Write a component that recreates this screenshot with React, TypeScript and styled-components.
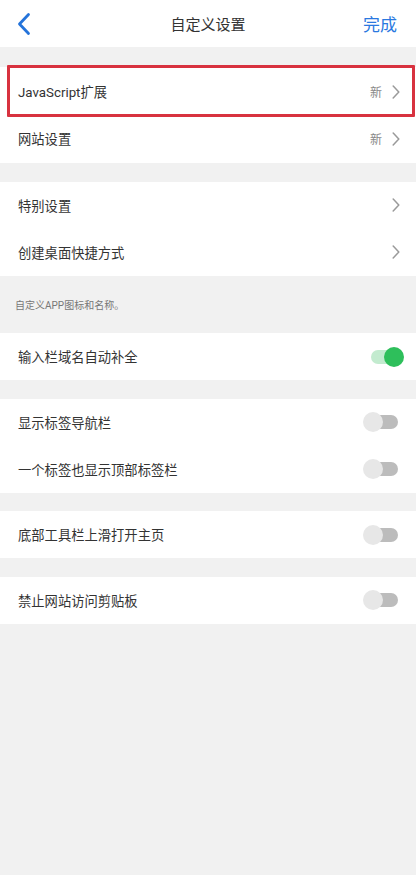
import React from "react";
import styled, { createGlobalStyle } from "styled-components";

const GlobalStyle = createGlobalStyle`
  html, body {
    margin: 0;
    padding: 0;
    background: #f1f1f1;
  }
  body {
    font-family: Roboto, "Noto Sans CJK SC", sans-serif;
    color: #333;
  }
`;

const Page = styled.div`
  width: 416px;
  min-height: 875px;
  background: #f1f1f1;
  display: flex;
  flex-direction: column;
`;

const Header = styled.header`
  height: 47px;
  background: #fff;
  display: grid;
  grid-template-columns: 80px 1fr 80px;
  align-items: center;
  margin-bottom: 20px;
`;

const BackButton = styled.div`
  padding-left: 16px;
  display: flex;
  align-items: center;
  svg {
    display: block;
  }
`;

const Title = styled.div`
  text-align: center;
  font-size: 15px;
  color: #333;
`;

const Done = styled.div`
  text-align: right;
  padding-right: 19px;
  font-size: 17px;
  color: #2a78e0;
`;

const Group = styled.section<{ $pad?: number }>`
  background: #fff;
  display: flex;
  flex-direction: column;
  padding: ${(p) => p.$pad ?? 0}px 0;
  margin-bottom: 18.6px;
`;

const Row = styled.div<{ $highlight?: boolean }>`
  position: relative;
  height: 47px;
  display: flex;
  align-items: center;
  padding: 0 12px 0 18px;
  font-size: 13.3px;
  color: #333;

  ${(p) =>
    p.$highlight &&
    `
    &::after {
      content: "";
      position: absolute;
      left: 7px;
      right: 1px;
      top: -3px;
      bottom: -2px;
      border: 3px solid #d8323f;
      border-radius: 1px;
      pointer-events: none;
    }
  `}
`;

const Label = styled.span`
  flex: 1;
`;

const Badge = styled.span`
  font-size: 12px;
  color: #888;
  margin-right: 7px;
`;

const Chevron = styled.span`
  width: 14px;
  display: flex;
  justify-content: center;
  margin-right: 1px;
  svg {
    display: block;
  }
`;

const Caption = styled.div`
  height: 57.6px;
  display: flex;
  align-items: center;
  padding-left: 15px;
  font-size: 10px;
  color: #777;
  margin-top: -18.6px;
`;

const Switch = styled.div`
  position: relative;
  width: 40px;
  height: 20px;
  margin-right: -1px;
`;

const Track = styled.div<{ $on?: boolean }>`
  position: absolute;
  top: 3px;
  height: 14px;
  border-radius: 7px;
  left: ${(p) => (p.$on ? "6px" : "8px")};
  right: ${(p) => (p.$on ? "4px" : "7px")};
  background: ${(p) => (p.$on ? "#c3ebcf" : "#bcbcbc")};
`;

const Knob = styled.div<{ $on?: boolean }>`
  position: absolute;
  top: 0;
  width: 20px;
  height: 20px;
  border-radius: 50%;
  left: ${(p) => (p.$on ? "19px" : "-2px")};
  background: ${(p) => (p.$on ? "#2ebf5b" : "#e7e7e7")};
`;

const ChevronIcon = () => (
  <svg width="8" height="14" viewBox="0 0 8 14">
    <path d="M1.2 1l5.6 6-5.6 6" fill="none" stroke="#9a9a9a" strokeWidth="1.5" strokeLinecap="round" strokeLinejoin="round" />
  </svg>
);

const Toggle: React.FC<{ on?: boolean }> = ({ on }) => (
  <Switch>
    <Track $on={on} />
    <Knob $on={on} />
  </Switch>
);

type Item = {
  label: string;
  badge?: string;
  arrow?: boolean;
  toggle?: boolean;
  on?: boolean;
  highlight?: boolean;
};

const SettingRow: React.FC<{ item: Item }> = ({ item }) => (
  <Row $highlight={item.highlight}>
    <Label>{item.label}</Label>
    {item.badge && <Badge>{item.badge}</Badge>}
    {item.arrow && (
      <Chevron>
        <ChevronIcon />
      </Chevron>
    )}
    {item.toggle && <Toggle on={item.on} />}
  </Row>
);

const groups: { items: Item[]; caption?: string; pad?: number }[] = [
  {
    pad: 1,
    items: [
      { label: "JavaScript扩展", badge: "新", arrow: true, highlight: true },
      { label: "网站设置", badge: "新", arrow: true },
    ],
  },
  {
    items: [
      { label: "特别设置", arrow: true },
      { label: "创建桌面快捷方式", arrow: true },
    ],
    caption: "自定义APP图标和名称。",
  },
  { items: [{ label: "输入栏域名自动补全", toggle: true, on: true }] },
  {
    items: [
      { label: "显示标签导航栏", toggle: true },
      { label: "一个标签也显示顶部标签栏", toggle: true },
    ],
  },
  { items: [{ label: "底部工具栏上滑打开主页", toggle: true }] },
  { items: [{ label: "禁止网站访问剪贴板", toggle: true }] },
];

export default function App() {
  return (
    <Page>
      <GlobalStyle />
      <Header>
        <BackButton>
          <svg width="16" height="24" viewBox="0 0 16 24">
            <path d="M12.5 2.5L3.5 12l9 9.5" fill="none" stroke="#2473da" strokeWidth="2.8" strokeLinecap="round" strokeLinejoin="round" />
          </svg>
        </BackButton>
        <Title>自定义设置</Title>
        <Done>完成</Done>
      </Header>
      {groups.map((g, i) => (
        <React.Fragment key={i}>
          <Group $pad={g.pad}>
            {g.items.map((it) => (
              <SettingRow key={it.label} item={it} />
            ))}
          </Group>
          {g.caption && <Caption>{g.caption}</Caption>}
        </React.Fragment>
      ))}
    </Page>
  );
}
